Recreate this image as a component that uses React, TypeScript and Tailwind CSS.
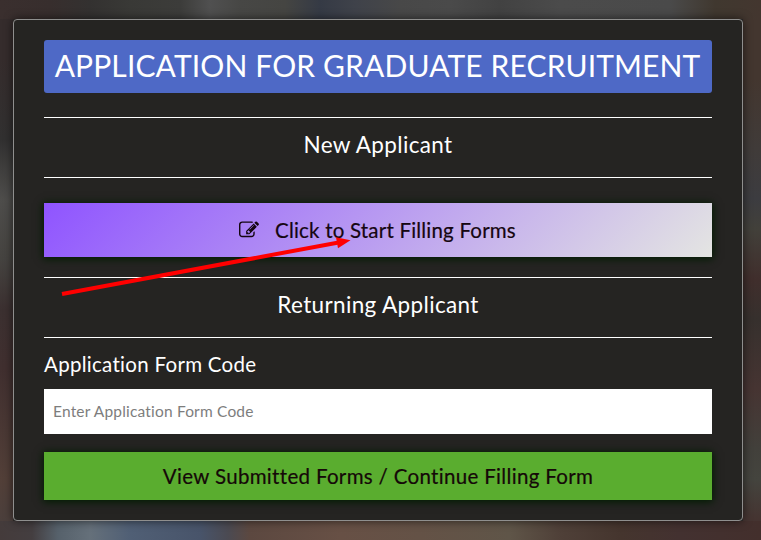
const topBlur =
  "bg-[linear-gradient(90deg,#3a2f2e,#372e2d_50px,#333130_90px,#393936_130px,#3c3c3a_180px,#505050_210px,#474745_240px,#454542_285px,#353a45_320px,#3f424a_355px,#484848_400px,#4a4a4a_450px,#424242_500px,#4b4b4b_560px,#4a4a4a_670px,#40382f_715px,#43362f)]";

const bottomBlur =
  "bg-[linear-gradient(90deg,#443b3b,#443e40_32px,#56616b_58px,#65707a_90px,#505f75_130px,#48546a_200px,#4b4a52_228px,#5c4840_250px,#675045_340px,#645246_420px,#5f5548_510px,#4f4038_560px,#45352e_620px,#433130_680px,#432f2c)]";

const leftBlur =
  "bg-[linear-gradient(#352c2c_40px,#313030_120px,#4e4d4b_180px,#454340_240px,#3b3030_290px,#402f2f_350px,#523f38_460px,#4b3f3c)]";

const rightBlur =
  "bg-[linear-gradient(#43362f_60px,#403b39_130px,#3c3c40_180px,#42403a_210px,#402e2c_260px,#36302d_300px,#463432_370px,#42403b_430px,#44443e_460px,#453431_500px)]";

function EditIcon() {
  return (
    <svg viewBox="0 0 1792 1792" className="h-[20px] w-[20px] shrink-0" fill="currentColor">
      <path d="M888 1184l116-116-152-152-116 116v56h96v96h56zm440-720q-16-16-33 1l-350 350q-17 17-1 33t33-1l350-350q17-17 1-33zm80 594v190q0 119-84.5 203.5t-203.5 84.5h-832q-119 0-203.5-84.5t-84.5-203.5v-832q0-119 84.5-203.5t203.5-84.5h832q63 0 117 25 15 7 18 23 3 17-9 29l-49 49q-14 14-32 8-23-6-45-6h-832q-66 0-113 47t-47 113v832q0 66 47 113t113 47h832q66 0 113-47t47-113v-126q0-13 9-22l64-64q15-15 35-7t20 29zm-96-738l288 288-672 672h-288v-288zm444 132l-92 92-288-288 92-92q28-28 68-28t68 28l152 152q28 28 28 68t-28 68z" />
    </svg>
  );
}

function SectionTitle({ children }: { children: string }) {
  return (
    <h2 className="flex h-[61px] items-center justify-center border-y border-white pb-[5px] text-[22.5px] tracking-[0.35px] text-white">
      {children}
    </h2>
  );
}

export default function App() {
  return (
    <div className="isolate grid h-[540px] grid-cols-[13px_730px_18px] grid-rows-[19px_502px_19px] overflow-hidden bg-[#2e2b29] font-['Lato',sans-serif]">
      <div className={`col-span-3 ${topBlur}`} />
      <div className={leftBlur} />
      <div className="relative rounded-[4px] border border-[#8f8f8e] bg-[#252422] px-[30px] pt-[20px] shadow-[0_0_10px_rgba(0,0,0,0.6)]">
        <h1 className="flex h-[53px] w-[668px] items-center justify-center rounded-[3px] bg-[#4e69c6] pr-[1px] pb-[2px] text-[30px] whitespace-nowrap text-white tracking-[0.13px]">
          APPLICATION FOR GRADUATE RECRUITMENT
        </h1>

        <div className="mt-[24px]">
          <SectionTitle>New Applicant</SectionTitle>
        </div>

        <button className="mt-[25px] flex h-[54px] w-full items-center justify-center gap-[16px] bg-[linear-gradient(135deg,#8f54ff,#e4e5e2)] pr-[1px] text-[20.5px] tracking-[0.2px] text-[#150610] shadow-[0_1px_8px_1px_#001c00]">
          <EditIcon />
          <span className="[-webkit-text-stroke:0.2px_#150610]">Click to Start Filling Forms</span>
        </button>

        <div className="mt-[20px]">
          <SectionTitle>Returning Applicant</SectionTitle>
        </div>

        <label htmlFor="code" className="mt-[11px] block h-[30px] text-[20.5px] leading-[30px] tracking-[0.29px] text-white">
          Application Form Code
        </label>
        <input
          id="code"
          type="text"
          placeholder="Enter Application Form Code"
          className="mt-[10px] block h-[45px] w-full bg-white px-[9px] pb-[2px] text-[15.5px] tracking-[0.18px] placeholder:text-[#7d7d7d]"
        />

        <button className="mt-[18px] block h-[48px] w-full bg-[#5aad2f] text-[20.5px] tracking-[0.32px] text-[#150808] shadow-[0_1px_8px_1px_#001c00] [-webkit-text-stroke:0.2px_#150808]">
          View Submitted Forms / Continue Filling Form
        </button>

        {/* pointer to the start button */}
        <svg className="pointer-events-none absolute top-[210px] left-[42px]" width="300" height="74" viewBox="56 230 300 74">
          <path d="M62 294 L340 242.2" stroke="#ff0000" strokeWidth="4" />
          <path d="M350.5 240.3 L336 237.3 L338 248.2 Z" fill="#ff0000" />
        </svg>
      </div>
      <div className={`-z-10 ${rightBlur}`} />
      <div className={`-z-10 col-span-3 ${bottomBlur}`} />
    </div>
  );
}
